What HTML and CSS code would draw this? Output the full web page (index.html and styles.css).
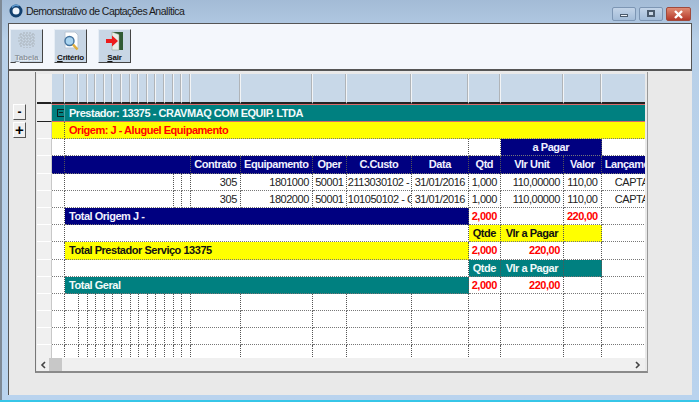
FILE: index.html
```html
<!DOCTYPE html>
<html lang="pt">
<head>
<meta charset="utf-8">
<title>Demonstrativo de Captações Analítica</title>
<link rel="stylesheet" href="styles.css">
</head>
<body>
<div class="window">
  <header class="titlebar">
    <svg class="app-icon" width="14" height="14" viewBox="0 0 14 14"><circle cx="7" cy="7" r="5" fill="#eef4fb" stroke="#12406f" stroke-width="3"/><path d="M3 3.5A5 5 0 0 1 10 2" fill="none" stroke="#5f9ad0" stroke-width="1.5"/></svg>
    <span class="title">Demonstrativo de Captações Analítica</span>
    <div class="controls">
      <span class="ctl"><i class="min"></i></span>
      <span class="ctl"><i class="max"></i></span>
      <span class="ctl close"><svg width="11" height="9" viewBox="0 0 11 9"><path d="M2 1l7 7M9 1l-7 7" stroke="#fff" stroke-width="2.4"/></svg></span>
    </div>
  </header>
  <div class="client">
    <div class="toolbar">
      <button class="tool disabled">
        <svg width="20" height="18" viewBox="0 0 20 18"><path d="M4 2v15M7 1v16M10 1v16M13 1v16M16 2v15M2 4h16M1 7h18M1 10h18M2 13h16" stroke="#aeb7c0" stroke-width="1.2" stroke-dasharray="2 1" fill="none"/></svg>
        <span><u>T</u>abela</span>
      </button>
      <button class="tool">
        <svg width="20" height="20" viewBox="0 0 20 20"><path d="M4 1h10l3 3v13H4z" fill="#fff" stroke="#b9c6d4"/><circle cx="8.500" cy="10" r="4.500" fill="#a9d4f0" stroke="#44739e" stroke-width="1.400"/><path d="M12 13.500l4.500 5" stroke="#e0ae3c" stroke-width="2.600"/></svg>
        <span><u>C</u>ritério</span>
      </button>
      <button class="tool">
        <svg width="20" height="20" viewBox="0 0 20 20"><path d="M7 1h11v18H7z" fill="#2f5a34"/><path d="M7 1l7 2.500V19H7z" fill="#e8eee8" stroke="#8a9a8a" stroke-width=".5"/><path d="M1 8h6V4.500l6 5.500-6 5.500V12H1z" fill="#ec1c1c"/></svg>
        <span><u>S</u>air</span>
      </button>
    </div>
    <div class="workarea">
      <div class="gutter">
        <button class="step minus">-</button>
        <button class="step plus">+</button>
      </div>
      <div class="gridpanel">
        <div class="gridclip">
          <table class="grid">
            <colgroup>
              <col class="c15"><col class="c13"><col class="c14">
              <col class="c8"><col class="c8"><col class="c9"><col class="c9"><col class="c8"><col class="c9"><col class="c9"><col class="c8"><col class="c9"><col class="c9"><col class="c8"><col class="c9"><col class="c8">
              <col class="c50"><col class="c72"><col class="c34"><col class="c65"><col class="c57"><col class="c32"><col class="c63"><col class="c38"><col class="c46">
            </colgroup>
            <tr class="top">
              <td class="rh"></td><td></td><td></td><td></td><td></td><td></td><td></td><td></td><td></td><td></td><td></td><td></td><td></td><td></td><td></td><td></td><td></td><td></td><td></td><td></td><td></td><td></td><td></td><td></td><td></td>
            </tr>
            <tr class="r teal first">
              <td class="rh"></td><td class="tog"><i class="box"></i></td><td colspan="23" class="b lab">Prestador: 13375 - CRAVMAQ COM EQUIP. LTDA</td>
            </tr>
            <tr class="r yel">
              <td class="rh"></td><td></td><td colspan="23" class="b red lab">Origem: J - Aluguel Equipamento</td>
            </tr>
            <tr class="r">
              <td class="rh"></td><td></td><td colspan="19"></td><td></td><td class="navy b ctr" colspan="2">a Pagar</td><td></td>
            </tr>
            <tr class="r navy b ctr">
              <td class="rh"></td><td></td><td colspan="14"></td><td>Contrato</td><td>Equipamento</td><td>Oper</td><td>C.Custo</td><td>Data</td><td>Qtd</td><td>Vlr Unit</td><td>Valor</td><td class="lft">Lançamento</td>
            </tr>
            <tr class="r">
              <td class="rh"></td><td></td><td colspan="12"></td><td></td><td></td><td class="num">305</td><td class="num">1801000</td><td class="ctr">50001</td><td class="cc">2113030102 - CAPTA</td><td class="ctr">31/01/2016</td><td class="ctr">1,000</td><td class="num">110,00000</td><td class="ctr">110,00</td><td class="num lead">CAPTAÇÃO</td>
            </tr>
            <tr class="r">
              <td class="rh"></td><td></td><td colspan="12"></td><td></td><td></td><td class="num">305</td><td class="num">1802000</td><td class="ctr">50001</td><td class="cc">101050102 - CAPTA</td><td class="ctr">31/01/2016</td><td class="ctr">1,000</td><td class="num">110,00000</td><td class="ctr">110,00</td><td class="num lead">CAPTAÇÃO</td>
            </tr>
            <tr class="r">
              <td class="rh"></td><td></td><td colspan="19" class="navy b lab">Total Origem J -</td><td class="b red ctr">2,000</td><td></td><td class="b red ctr">220,00</td><td></td>
            </tr>
            <tr class="r">
              <td class="rh"></td><td></td><td colspan="19"></td><td class="yel b ctr">Qtde</td><td class="yel b ctr">Vlr a Pagar</td><td class="yel"></td><td></td>
            </tr>
            <tr class="r">
              <td class="rh"></td><td></td><td colspan="19" class="yel b lab">Total Prestador Serviço 13375</td><td class="b red ctr">2,000</td><td class="b red num">220,00</td><td></td><td></td>
            </tr>
            <tr class="r">
              <td class="rh"></td><td></td><td colspan="19"></td><td class="teal b ctr">Qtde</td><td class="teal b ctr">Vlr a Pagar</td><td class="teal"></td><td></td>
            </tr>
            <tr class="r">
              <td class="rh"></td><td></td><td colspan="19" class="teal b lab">Total Geral</td><td class="b red ctr">2,000</td><td class="b red num">220,00</td><td></td><td></td>
            </tr>
            <tr class="r"><td class="rh"></td><td></td><td></td><td></td><td></td><td></td><td></td><td></td><td></td><td></td><td></td><td></td><td></td><td></td><td></td><td></td><td></td><td></td><td></td><td></td><td></td><td></td><td></td><td></td><td></td></tr>
            <tr class="r"><td class="rh"></td><td></td><td></td><td></td><td></td><td></td><td></td><td></td><td></td><td></td><td></td><td></td><td></td><td></td><td></td><td></td><td></td><td></td><td></td><td></td><td></td><td></td><td></td><td></td><td></td></tr>
            <tr class="r"><td class="rh"></td><td></td><td></td><td></td><td></td><td></td><td></td><td></td><td></td><td></td><td></td><td></td><td></td><td></td><td></td><td></td><td></td><td></td><td></td><td></td><td></td><td></td><td></td><td></td><td></td></tr>
            <tr class="r"><td class="rh"></td><td></td><td></td><td></td><td></td><td></td><td></td><td></td><td></td><td></td><td></td><td></td><td></td><td></td><td></td><td></td><td></td><td></td><td></td><td></td><td></td><td></td><td></td><td></td><td></td></tr>
          </table>
        </div>
        <div class="hscroll">
          <svg width="7" height="8" viewBox="0 0 7 8"><path d="M5 1L2 4l3 3" fill="none" stroke="#444" stroke-width="1.6"/></svg>
          <i class="thumb"></i>
          <svg class="right" width="7" height="8" viewBox="0 0 7 8"><path d="M2 1l3 3-3 3" fill="none" stroke="#444" stroke-width="1.6"/></svg>
        </div>
      </div>
    </div>
  </div>
</div>
</body>
</html>
```

FILE: styles.css
```css
* { box-sizing: border-box; }
html, body { margin: 0; padding: 0; }
body {
  width: 699px;
  height: 402px;
  overflow: hidden;
  background: #37c6e8;
  font-family: "Liberation Sans", Arial, sans-serif;
}
.window {
  width: 699px;
  height: 400px;
  display: flex;
  flex-direction: column;
  padding: 0 7px 5px 6px;
  background: linear-gradient(#a3bbd6 0, #b8d0e8 40px, #b9d3ee 100%);
  border-left: 2px solid #7f8a96;
}
.titlebar {
  flex: 0 0 23px;
  display: flex;
  align-items: center;
  padding: 0 1px 1px 0;
}
.app-icon { margin-right: 2px; margin-left: 1px; }
.title {
  font: 10.500px "Liberation Sans", sans-serif;
  color: #1b1b1b;
  letter-spacing: -.55px;
  padding-left: 1px;
}
.controls {
  margin-left: auto;
  display: flex;
  gap: 3px;
  align-self: flex-start;
  margin-top: 7px;
}
.ctl {
  width: 24px;
  height: 14px;
  border: 1px solid #7d96b4;
  border-radius: 2px;
  background: linear-gradient(#c3d4e8, #a3bcd8);
  display: flex;
  align-items: center;
  justify-content: center;
}
.ctl.close {
  width: 25px;
  height: 14px;
  background: linear-gradient(#df8a72, #b5392a);
  border-color: #a04a3c;
}
.min { width: 8px; height: 3px; margin-top: 3px; background: #eef2f7; border: 1px solid #4a5a6c; }
.max { width: 8px; height: 7px; margin-top: -2px; background: #c9d7e6; border: 2px solid #4a5a6c; }
.client {
  flex: 1;
  display: flex;
  flex-direction: column;
  background: #e9e9e9;
  border-left: 1px solid #555;
  min-height: 0;
}
.toolbar {
  flex: 0 0 48px;
  display: flex;
  gap: 11px;
  padding: 5px 0 0 1px;
  background: #f4f7fc;
  border: 1px solid #555;
  border-left: 0;
  border-bottom-width: 2px;
}
.tool {
  width: 33px;
  height: 34px;
  padding: 1px 0 0;
  display: flex;
  flex-direction: column;
  align-items: center;
  background: #c8d6e5;
  border: 0;
  border-right: 1px solid #444;
  border-bottom: 1px solid #444;
  border-top: 1px solid #e6edf5;
  border-left: 1px solid #e6edf5;
  font: bold 8px "Liberation Sans", sans-serif;
  letter-spacing: -.2px;
  color: #111;
}
.tool svg { flex: none; }
.tool span { margin-top: 2px; }
.tool.disabled svg { margin-bottom: 2px; }
.tool.disabled { color: #8c96a0; text-shadow: 1px 1px 0 #eef3f8; }
.workarea {
  flex: 1;
  display: flex;
  min-height: 0;
}
.gutter {
  flex: 0 0 26px;
  display: flex;
  flex-direction: column;
  gap: 2px;
  padding: 33px 0 0 4px;
}
.step {
  width: 13px;
  height: 16px;
  padding: 0;
  background: #eeeeee;
  border: 1px solid #fff;
  border-right-color: #555;
  border-bottom-color: #555;
  font: bold 12px/12px "Liberation Sans", sans-serif;
  color: #000;
}
.plus { font-size: 15px; }
.gridpanel {
  width: 613px;
  height: 301px;
  margin-top: 1px;
  display: flex;
  flex-direction: column;
  padding: 2px 2px 1px 1px;
  background: #e9e9e9;
  border: 1px solid #777;
  border-top: 0;
  border-right-color: #999;
  border-bottom: 2px solid #8a8a8a;
}
.gridclip {
  flex: 0 0 284px;
  overflow: hidden;
  background: #fff;
}
.grid {
  table-layout: fixed;
  border-collapse: separate;
  border-spacing: 0;
  width: 610px;
  font-size: 11px;
  letter-spacing: -.47px;
}
.c8 { width: 8.500px; }
.c9 { width: 8.700px; }
.c13 { width: 13px; }
.c14 { width: 14px; }
.c15 { width: 15px; }
.c50 { width: 50px; }
.c72 { width: 72px; }
.c34 { width: 34px; }
.c65 { width: 65px; }
.c57 { width: 57px; }
.c32 { width: 32px; }
.c63 { width: 63px; }
.c38 { width: 38px; }
.c46 { width: 46px; }
.grid td {
  padding: 0 3px;
  overflow: hidden;
  white-space: nowrap;
  border-right: 1px dotted #555;
  border-bottom: 1px dotted #777;
  color: #222;
}
.r { height: 17.2px; }
.r td { height: 17.2px; }
.r.first, .r.first td { height: 18px; }
.grid td.rh {
  padding: 0;
  background: #f0f0f0;
  border-right: 1px solid #c8c8c8;
  border-bottom: 1px solid #fff;
}
.top { height: 30px; }
.grid .top td {
  height: 30px;
  background: #c8d8e8;
  border-right: 1px solid #f2f4f6;
  border-bottom: 2px solid #222;
  box-shadow: inset -1px 0 0 #b0b4b8;
}
.grid .top td.rh { background: #f0f0f0; box-shadow: none; border-right-color: #f0f0f0; }
.grid tr.first td:not(.rh) { box-shadow: inset 0 1px 0 #d86a6a; border-bottom: 1px solid #d86a6a; border-right: 1px solid #4d9f9f; }
.grid tr.first td:last-child { border-right: 0; }
.grid tr.first td.rh { border-bottom: 1px solid #222; }
.grid td.b, tr.b td { font-weight: bold; }
.grid td.lab { padding-left: 4px; }
.grid tr.teal td:not(.rh), .grid td.teal { background: #008080; color: #f2fafa; }
.grid tr.yel td:not(.rh), .grid td.yel { background: #ffff00; color: #111; }
.grid tr.yel td.red { color: #f00; }
.grid tr.navy td:not(.rh), .grid td.navy { background: #000080; color: #f0f0ff; }
.grid td.red { color: #f00; }
.grid td.num { text-align: right; }
.grid td.ctr, .grid tr.ctr td { text-align: center; padding: 0; }
.grid tr.ctr td.lft { text-align: left; padding-left: 3px; }
.grid td.lead { padding-right: 0; text-align: left; padding-left: 13px; }
.grid td.cc { padding: 0 0 0 1px; }
.grid td.tog { padding: 0 0 0 5px; }
.box {
  display: block;
  width: 8px;
  height: 8px;
  border: 1px solid #0c2020;
  background: linear-gradient(#0c2020, #0c2020) center / 4px 1px no-repeat;
}
.hscroll {
  flex: 0 0 13px;
  display: flex;
  align-items: center;
  padding: 0 4px 0 3px;
  background: #f0f0f0;
}
.thumb {
  width: 13px;
  height: 13px;
  margin-left: 2px;
  background: #c8c8c8;
}
.hscroll .right { margin-left: auto; }
```
